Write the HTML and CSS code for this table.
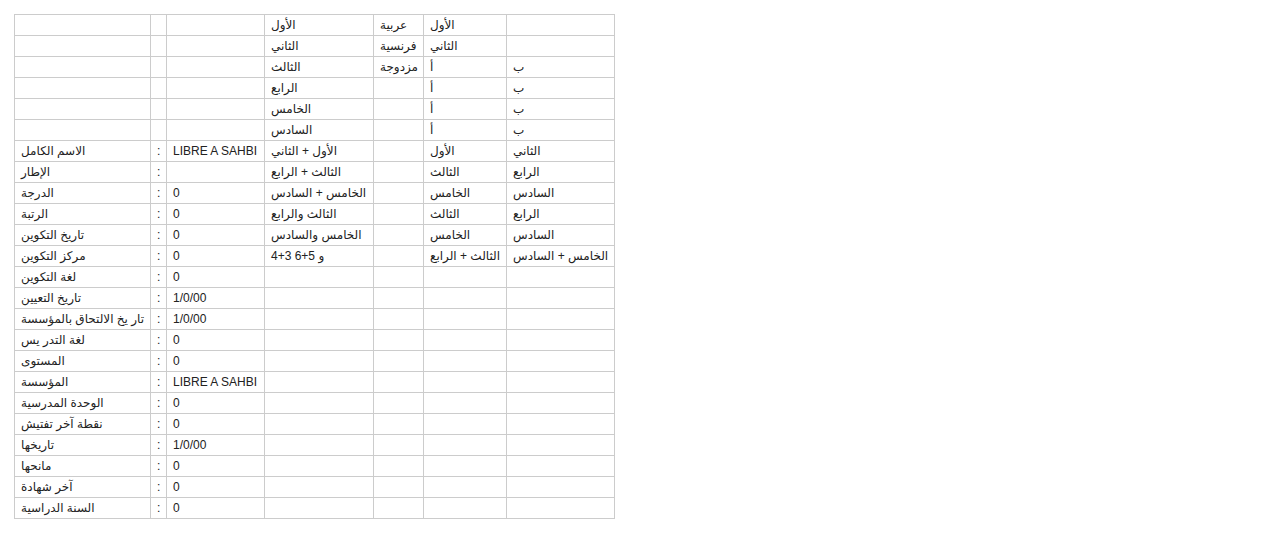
FILE: index.html
```html
<!DOCTYPE html>
<html lang="ar">
<head>
<meta charset="utf-8">
<title>Sheet</title>
<link rel="stylesheet" href="styles.css">
</head>
<body>
<div class="page">
<table class="sheet">
<colgroup>
<col class="c-a"><col class="c-b"><col class="c-c"><col class="c-d"><col class="c-e"><col class="c-f"><col class="c-g">
</colgroup>
<tbody>
<tr><td></td><td></td><td></td><td>الأول</td><td>عربية</td><td>الأول</td><td></td></tr>
<tr><td></td><td></td><td></td><td>الثاني</td><td>فرنسية</td><td>الثاني</td><td></td></tr>
<tr><td></td><td></td><td></td><td>الثالث</td><td>مزدوجة</td><td>أ</td><td>ب</td></tr>
<tr><td></td><td></td><td></td><td>الرابع</td><td></td><td>أ</td><td>ب</td></tr>
<tr><td></td><td></td><td></td><td>الخامس</td><td></td><td>أ</td><td>ب</td></tr>
<tr><td></td><td></td><td></td><td>السادس</td><td></td><td>أ</td><td>ب</td></tr>
<tr><td>الاسم الكامل</td><td>:</td><td>LIBRE A SAHBI</td><td>الأول + الثاني</td><td></td><td>الأول</td><td>الثاني</td></tr>
<tr><td>الإطار</td><td>:</td><td></td><td>الثالث + الرابع</td><td></td><td>الثالث</td><td>الرابع</td></tr>
<tr><td>الدرجة</td><td>:</td><td>0</td><td>الخامس + السادس</td><td></td><td>الخامس</td><td>السادس</td></tr>
<tr><td>الرتبة</td><td>:</td><td>0</td><td>الثالث والرابع</td><td></td><td>الثالث</td><td>الرابع</td></tr>
<tr><td>تاريخ التكوين</td><td>:</td><td>0</td><td>الخامس والسادس</td><td></td><td>الخامس</td><td>السادس</td></tr>
<tr><td>مركز التكوين</td><td>:</td><td>0</td><td>4+3 6+5 و</td><td></td><td>الثالث + الرابع</td><td>الخامس + السادس</td></tr>
<tr><td>لغة التكوين</td><td>:</td><td>0</td><td></td><td></td><td></td><td></td></tr>
<tr><td>تاريخ التعيين</td><td>:</td><td>1/0/00</td><td></td><td></td><td></td><td></td></tr>
<tr><td>تار يخ الالتحاق بالمؤسسة</td><td>:</td><td>1/0/00</td><td></td><td></td><td></td><td></td></tr>
<tr><td>لغة التدر يس</td><td>:</td><td>0</td><td></td><td></td><td></td><td></td></tr>
<tr><td>المستوى</td><td>:</td><td>0</td><td></td><td></td><td></td><td></td></tr>
<tr><td>المؤسسة</td><td>:</td><td>LIBRE A SAHBI</td><td></td><td></td><td></td><td></td></tr>
<tr><td>الوحدة المدرسية</td><td>:</td><td>0</td><td></td><td></td><td></td><td></td></tr>
<tr><td>نقطة آخر تفتيش</td><td>:</td><td>0</td><td></td><td></td><td></td><td></td></tr>
<tr><td>تاريخها</td><td>:</td><td>1/0/00</td><td></td><td></td><td></td><td></td></tr>
<tr><td>مانحها</td><td>:</td><td>0</td><td></td><td></td><td></td><td></td></tr>
<tr><td>آخر شهادة</td><td>:</td><td>0</td><td></td><td></td><td></td><td></td></tr>
<tr><td>السنة الدراسية</td><td>:</td><td>0</td><td></td><td></td><td></td><td></td></tr>
</tbody>
</table>
</div>
</body>
</html>
```
FILE: styles.css
```css
html, body {
  margin: 0;
  padding: 0;
  background: #ffffff;
}

.page {
  padding: 14px;
}

.sheet {
  border-collapse: collapse;
  table-layout: fixed;
  width: 601px;
  font-family: "Liberation Sans", "DejaVu Sans", Arial, sans-serif;
  font-size: 12px;
  color: #222222;
  direction: ltr;
}

.sheet td {
  border: 1px solid #cccccc;
  height: 20px;
  padding: 0 6px;
  text-align: left;
  vertical-align: middle;
  white-space: nowrap;
  overflow: hidden;
  line-height: 16px;
  box-sizing: border-box;
}

.sheet tr {
  height: 21px;
}

.c-a { width: 136px; }
.c-b { width: 16px; }
.c-c { width: 98px; }
.c-d { width: 109px; }
.c-e { width: 50px; }
.c-f { width: 83px; }
.c-g { width: 108px; }
```
